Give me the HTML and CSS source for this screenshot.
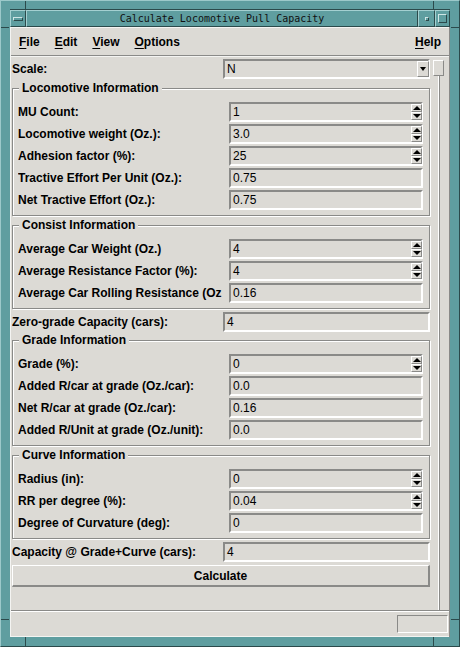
FILE: index.html
```html
<!DOCTYPE html>
<html>
<head>
<meta charset="utf-8">
<title>Calculate Locomotive Pull Capacity</title>
<link rel="stylesheet" href="styles.css">
</head>
<body>
<div class="wm">
  <span class="grip g-tl-v"></span><span class="grip g-tl-h"></span>
  <span class="grip g-tr-v"></span><span class="grip g-tr-h"></span>
  <span class="grip g-bl-v"></span><span class="grip g-bl-h"></span>
  <span class="grip g-br-v"></span><span class="grip g-br-h"></span>
  <div class="titlebar">
    <div class="tb-btn menu-btn"><span class="bar"></span></div>
    <div class="title">Calculate Locomotive Pull Capacity</div>
    <div class="tb-btn min-btn"><span class="dot"></span></div>
    <div class="tb-btn max-btn"><span class="sq"></span></div>
  </div>
  <div class="client">
    <div class="menubar">
      <span class="menu"><u>F</u>ile</span>
      <span class="menu"><u>E</u>dit</span>
      <span class="menu"><u>V</u>iew</span>
      <span class="menu"><u>O</u>ptions</span>
      <span class="menu help"><u>H</u>elp</span>
    </div>
    <div class="main">
      <div class="content">
        <div class="row outer">
          <span class="lbl">Scale:</span>
          <div class="entry combo"><span class="val">N</span><span class="combo-btn"><span class="tri-down"></span></span></div>
        </div>

        <fieldset class="group g-loco">
          <legend>Locomotive Information</legend>
          <div class="row">
            <span class="lbl">MU Count:</span>
            <div class="entry"><span class="val">1</span><span class="spin"><span class="sb"><span class="tri-up"></span></span><span class="sb"><span class="tri-down"></span></span></span></div>
          </div>
          <div class="row">
            <span class="lbl">Locomotive weight (Oz.):</span>
            <div class="entry"><span class="val">3.0</span><span class="spin"><span class="sb"><span class="tri-up"></span></span><span class="sb"><span class="tri-down"></span></span></span></div>
          </div>
          <div class="row">
            <span class="lbl">Adhesion factor (%):</span>
            <div class="entry"><span class="val">25</span><span class="spin"><span class="sb"><span class="tri-up"></span></span><span class="sb"><span class="tri-down"></span></span></span></div>
          </div>
          <div class="row">
            <span class="lbl">Tractive Effort Per Unit (Oz.):</span>
            <div class="entry"><span class="val">0.75</span></div>
          </div>
          <div class="row">
            <span class="lbl">Net Tractive Effort (Oz.):</span>
            <div class="entry"><span class="val">0.75</span></div>
          </div>
        </fieldset>

        <fieldset class="group g-consist">
          <legend>Consist Information</legend>
          <div class="row">
            <span class="lbl">Average Car Weight (Oz.)</span>
            <div class="entry"><span class="val">4</span><span class="spin"><span class="sb"><span class="tri-up"></span></span><span class="sb"><span class="tri-down"></span></span></span></div>
          </div>
          <div class="row">
            <span class="lbl">Average Resistance Factor (%):</span>
            <div class="entry"><span class="val">4</span><span class="spin"><span class="sb"><span class="tri-up"></span></span><span class="sb"><span class="tri-down"></span></span></span></div>
          </div>
          <div class="row">
            <span class="lbl">Average Car Rolling Resistance (Oz</span>
            <div class="entry"><span class="val">0.16</span></div>
          </div>
        </fieldset>

        <div class="row outer r-zero">
          <span class="lbl">Zero-grade Capacity (cars):</span>
          <div class="entry"><span class="val">4</span></div>
        </div>

        <fieldset class="group g-grade">
          <legend>Grade Information</legend>
          <div class="row">
            <span class="lbl">Grade (%):</span>
            <div class="entry"><span class="val">0</span><span class="spin"><span class="sb"><span class="tri-up"></span></span><span class="sb"><span class="tri-down"></span></span></span></div>
          </div>
          <div class="row">
            <span class="lbl">Added R/car at grade (Oz./car):</span>
            <div class="entry"><span class="val">0.0</span></div>
          </div>
          <div class="row">
            <span class="lbl">Net R/car at grade (Oz./car):</span>
            <div class="entry"><span class="val">0.16</span></div>
          </div>
          <div class="row">
            <span class="lbl">Added R/Unit at grade (Oz./unit):</span>
            <div class="entry"><span class="val">0.0</span></div>
          </div>
        </fieldset>

        <fieldset class="group g-curve">
          <legend>Curve Information</legend>
          <div class="row">
            <span class="lbl">Radius (in):</span>
            <div class="entry"><span class="val">0</span><span class="spin"><span class="sb"><span class="tri-up"></span></span><span class="sb"><span class="tri-down"></span></span></span></div>
          </div>
          <div class="row">
            <span class="lbl">RR per degree (%):</span>
            <div class="entry"><span class="val">0.04</span><span class="spin"><span class="sb"><span class="tri-up"></span></span><span class="sb"><span class="tri-down"></span></span></span></div>
          </div>
          <div class="row">
            <span class="lbl">Degree of Curvature (deg):</span>
            <div class="entry"><span class="val">0</span></div>
          </div>
        </fieldset>

        <div class="row outer r-cap">
          <span class="lbl">Capacity @ Grade+Curve (cars):</span>
          <div class="entry"><span class="val">4</span></div>
        </div>

        <div class="button">Calculate</div>
      </div>
      <div class="vscroll"><div class="slider"></div><div class="track"></div></div>
    </div>
    <div class="statusbar"><div class="statusbox"></div></div>
  </div>
</div>
</body>
</html>
```

FILE: styles.css
```css
html, body {
  margin: 0;
  padding: 0;
  background: #5f9ea0;
}

.wm {
  position: relative;
  width: 460px;
  height: 647px;
  box-sizing: border-box;
  padding: 8px 9px 9px 9px;
  background: #5f9ea0;
  border-top: 1px solid #9cc9ca;
  border-left: 1px solid #9cc9ca;
  border-right: 1px solid #2b4a4b;
  border-bottom: 1px solid #2b4a4b;
  display: flex;
  flex-direction: column;
  font-family: "Liberation Sans", Arial, sans-serif;
  font-size: 12px;
  color: #000;
}

.grip { position: absolute; background: #2b4a4b; }
.g-tl-v { left: 24px; top: 0; width: 1px; height: 8px; }
.g-tl-h { left: 0; top: 26px; width: 8px; height: 1px; }
.g-tr-v { right: 25px; top: 0; width: 1px; height: 8px; }
.g-tr-h { right: 0; top: 26px; width: 8px; height: 1px; }
.g-bl-v { left: 24px; bottom: 0; width: 1px; height: 9px; }
.g-bl-h { left: 0; bottom: 26px; width: 8px; height: 1px; }
.g-br-v { right: 25px; bottom: 0; width: 1px; height: 9px; }
.g-br-h { right: 0; bottom: 26px; width: 8px; height: 1px; }

.titlebar {
  height: 18px;
  display: flex;
  align-items: stretch;
  box-sizing: border-box;
  border-top: 1px solid #2b4a4b;
}

.tb-btn {
  box-sizing: border-box;
  border-top: 1px solid #a4d0d1;
  border-left: 1px solid #a4d0d1;
  border-right: 1px solid #2b4a4b;
  border-bottom: 1px solid #2b4a4b;
  display: flex;
  align-items: center;
  justify-content: center;
}
.menu-btn { width: 16px; }
.menu-btn .bar {
  width: 8px; height: 2px;
  border-top: 1px solid #cfe6e6;
  border-left: 1px solid #cfe6e6;
  border-right: 1px solid #2b4a4b;
  border-bottom: 1px solid #2b4a4b;
}
.min-btn { width: 17px; }
.min-btn .dot {
  width: 2px; height: 2px;
  border-top: 1px solid #cfe6e6;
  border-left: 1px solid #cfe6e6;
  border-right: 1px solid #2b4a4b;
  border-bottom: 1px solid #2b4a4b;
}
.max-btn { width: 15px; }
.max-btn .sq {
  width: 7px; height: 7px;
  border-top: 1px solid #cfe6e6;
  border-left: 1px solid #cfe6e6;
  border-right: 1px solid #2b4a4b;
  border-bottom: 1px solid #2b4a4b;
}

.title {
  flex: 1;
  box-sizing: border-box;
  border-top: 1px solid #a4d0d1;
  border-left: 1px solid #a4d0d1;
  border-right: 1px solid #2b4a4b;
  border-bottom: 1px solid #2b4a4b;
  font-family: "DejaVu Sans Mono", "Liberation Mono", monospace;
  font-size: 10px;
  line-height: 15px;
  text-align: center;
  color: #101010;
}

.client {
  flex: 1;
  display: flex;
  flex-direction: column;
  background: #dcdad5;
  border-left: 1px solid #f4f4f2;
  border-right: 1px solid #8a8a88;
}

.menubar {
  height: 29px;
  box-sizing: border-box;
  display: flex;
  align-items: center;
  gap: 15px;
  padding: 0 8px 0 8px;
  border-top: 1px solid #f4f4f2;
  border-bottom: 1px solid #8a8a88;
  font-weight: bold;
  font-size: 12px;
}
.menu u { text-decoration: underline; text-underline-offset: 2px; }
.menu.help { margin-left: auto; }

.main {
  flex: 1;
  display: flex;
  padding-left: 1px;
  border-top: 1px solid #f4f4f2;
}

.content {
  width: 418px;
  flex: none;
  padding-top: 2px;
  display: flex;
  flex-direction: column;
}

.row {
  height: 20px;
  display: flex;
  align-items: center;
}
.row + .row { margin-top: 2px; }

.lbl {
  font-weight: bold;
  white-space: nowrap;
  overflow: hidden;
  width: 211px;
  flex: none;
}

.entry {
  box-sizing: border-box;
  height: 20px;
  width: 194px;
  flex: none;
  display: flex;
  align-items: center;
  border-style: solid;
  border-width: 2px;
  border-color: #8a8a88 #ffffff #ffffff #8a8a88;
  background: #dcdad5;
}
.row.outer .entry { width: 207px; }
.val {
  flex: 1;
  padding-left: 2px;
  font-size: 12px;
  line-height: 16px;
  white-space: nowrap;
}

.spin {
  width: 11px;
  display: flex;
  flex-direction: column;
  margin-right: -1px;
}
.sb {
  box-sizing: border-box;
  height: 8px;
  width: 11px;
  border-top: 1px solid #ffffff;
  border-left: 1px solid #ffffff;
  border-right: 1px solid #8a8a88;
  border-bottom: 1px solid #8a8a88;
  display: flex;
  align-items: center;
  justify-content: center;
}
.tri-up {
  width: 0; height: 0;
  border-left: 4px solid transparent;
  border-right: 4px solid transparent;
  border-bottom: 4px solid #000;
}
.tri-down {
  width: 0; height: 0;
  border-left: 4px solid transparent;
  border-right: 4px solid transparent;
  border-top: 4px solid #000;
}

.combo-btn {
  box-sizing: border-box;
  width: 12px;
  height: 16px;
  border-top: 1px solid #ffffff;
  border-left: 1px solid #ffffff;
  border-right: 1px solid #8a8a88;
  border-bottom: 1px solid #8a8a88;
  display: flex;
  align-items: center;
  justify-content: center;
  margin-right: -1px;
}
.combo-btn .tri-down {
  border-left-width: 3px;
  border-right-width: 3px;
  border-top-width: 4px;
}

.group {
  margin: 0;
  padding: 7px 6px 5px 5px;
  min-width: 0;
  border: 1px solid #8a8a88;
  box-shadow: inset 1px 1px 0 #ffffff, 1px 1px 0 #ffffff;
}
.group legend {
  margin-left: 1px;
  padding: 0 3px;
  font-weight: bold;
  font-size: 12px;
  line-height: 14px;
  background: #dcdad5;
}
.g-loco { margin-top: 2px; }
.g-consist { margin-top: 2px; }
.r-zero { margin-top: 3px; }
.g-grade { margin-top: 1px; }
.g-curve { margin-top: 2px; }
.r-cap { margin-top: 3px; }

.button {
  margin-top: 3px;
  height: 22px;
  box-sizing: border-box;
  border-top: 1px solid #ffffff;
  border-left: 1px solid #ffffff;
  border-right: 2px solid #8a8a88;
  border-bottom: 2px solid #8a8a88;
  display: flex;
  align-items: center;
  justify-content: center;
  font-weight: bold;
}

.vscroll {
  flex: 1;
  display: flex;
  flex-direction: column;
  align-items: flex-start;
  padding-top: 3px;
  padding-left: 3px;
  box-sizing: border-box;
}
.slider {
  box-sizing: border-box;
  width: 11px;
  height: 16px;
  border-top: 1px solid #ffffff;
  border-left: 1px solid #ffffff;
  border-right: 1px solid #8a8a88;
  border-bottom: 1px solid #8a8a88;
}
.track {
  flex: 1;
  width: 2px;
  margin-left: 5px;
  border-left: 1px solid #ffffff;
  border-right: 1px solid #8a8a88;
  box-sizing: border-box;
}

.statusbar {
  height: 27px;
  box-sizing: border-box;
  border-top: 1px solid #8a8a88;
  box-shadow: inset 0 1px 0 #ffffff;
  border-bottom: 1px solid #f4f4f2;
  display: flex;
  align-items: center;
  justify-content: flex-end;
  padding-right: 1px;
}
.statusbox {
  width: 51px;
  height: 18px;
  box-sizing: border-box;
  border-top: 1px solid #8a8a88;
  border-left: 1px solid #8a8a88;
  border-right: 1px solid #ffffff;
  border-bottom: 1px solid #ffffff;
}
```
